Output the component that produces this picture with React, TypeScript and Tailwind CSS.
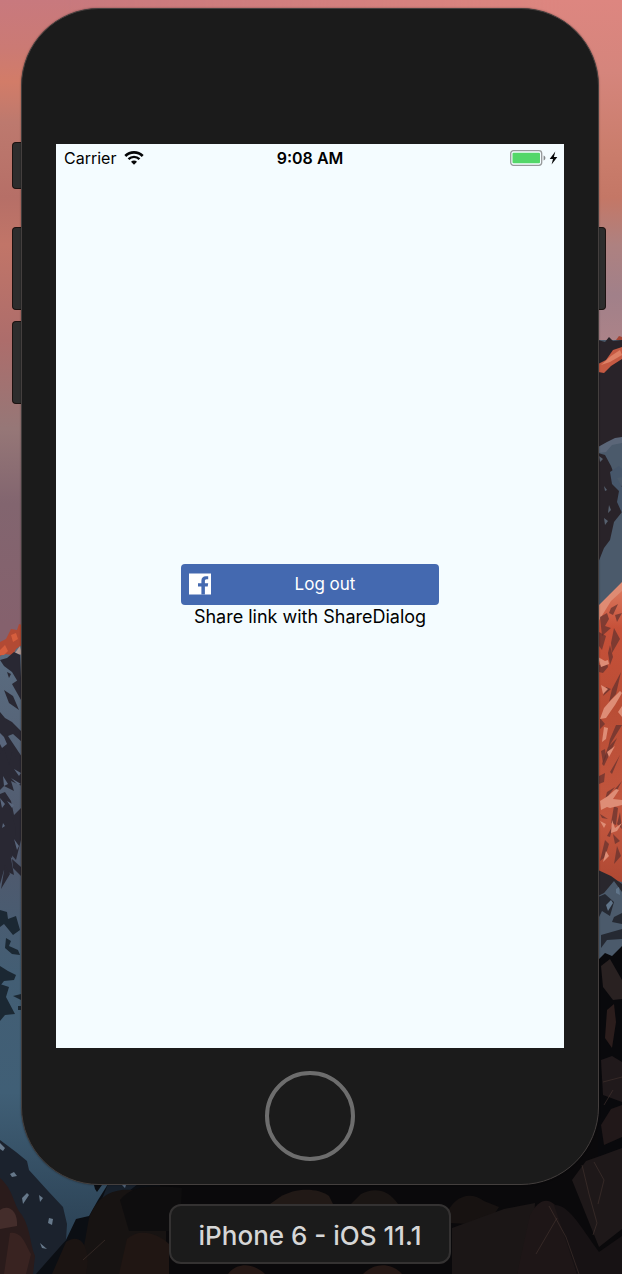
const darkRock: string[] = [
  "M0 660 L7 658 L14 652 L20 655 L22 700 L18 682 L12 672 L4 666 Z",
  "M4 690 L13 696 L19 710 L9 703 Z M12 684 L21 678 V700 Z M7 672 l4 2 -2 4 z",
  "M0 712 L5 718 L12 722 L22 732 V742 L13 734 L8 736 L16 748 L22 757 V780 L14 778 L0 765 Z",
  "M0 754 L4 748 L9 765 L12 752 L22 765 V786 L11 781 L14 791 L4 786 L0 790 Z",
  "M0 794 L5 792 L11 801 L14 815 L21 808 V840 L16 860 L10 853 L14 875 L4 870 L0 884 Z",
  "M0 807 L8 804 L16 829 L12 858 L0 850 Z M12 859 l9 8 v9 l-8 -8 z M5 865 l5 9 -9 15 z",
];

const lowerRock: string[] = [
  "M0 910 L7 912 L8 919 L16 916 L20 930 L13 935 L4 924 L0 927 Z",
  "M6 938 l5 3 -2 5 9 4 2 5 -8 -1 -7 -6 z M0 966 l8 5 8 4 -2 5 -10 1 -4 5 z",
  "M0 984 L9 987 L6 997 L15 1014 L5 1015 L0 1021 Z M13 996 l8 -2 v6 z M18 1006 h3 v4 h-3 z",
];

const snowLeft: string[] = [
  "M0 733 l4 4 3 7 -5 4 -2 -4 z M14 769 l7 4 -2 3 z M3 776 l5 8 -4 2 z M11 778 l10 6 -3 1 z",
  "M0 798 l5 6 -3 4 z M7 801 l7 4 -2 3 z M3 823 l2 3 -3 2 z M14 839 l5 7 -2 4 z",
];

const shadowRight: string[] = [
  "M598 340 L605 342 L609 337 L613 341 L622 340 V440 L598 449 Z",
  "M598 453 L605 455 L611 466 L618 485 L622 486 V512 L614 522 L610 540 L604 548 L598 563 Z",
];

const redCracks: string[] = [
  "M600 617 l7 -4 2 6 -4 7 6 2 -9 8 z M611 608 l7 -4 -5 11 -4 -2 z M615 615 l7 -2 -5 9 z",
  "M599 632 l7 4 -4 14 -3 -4 z M614 628 l6 11 -8 14 -1 -10 z M610 645 l3 12 -3 8 -2 -12 z",
  "M599 665 l8 -3 1 5 -5 6 -4 -1 z M606 687 l5 2 -8 7 z M621 672 l-5 22 -7 8 3 -13 z",
  "M600 718 l5 6 -5 5 z M622 725 l-14 23 2 -9 6 -14 z M617 738 l-13 28 -2 -2 6 -17 z M620 755 l-8 19 -2 -2 z",
  "M601 751 l4 -2 1 8 -3 6 z M599 776 l6 -3 -1 9 -5 2 z M615 787 l-10 13 2 -8 z M622 781 l-8 15 1 -7 z",
  "M614 806 l4 2 -2 17 -5 -2 z M620 812 l2 17 -5 -5 z M600 814 l8 5 -6 -1 z M613 825 l-3 12 -3 -1 z",
  "M605 840 l4 4 -4 13 -5 4 z M613 834 l7 7 -5 3 z M617 846 l4 10 -7 8 z",
];

const redLights: string[] = [
  "M598 657 l7 4 3 -1 1 4 -8 3 z M611 700 l9 -9 2 2 -7 12 -9 13 -6 1 4 -11 z",
  "M604 727 l4 1 -2 11 -4 3 z M600 801 l8 -5 8 -7 3 1 -6 9 9 1 v5 l-12 3 -3 -1 -6 3 z",
  "M600 821 l6 3 -2 4 z M612 820 l3 8 7 -5 -5 8 -6 2 z M606 851 l3 5 -6 6 z",
  "M607 752 l8 -6 -6 11 z M618 712 l4 -6 v11 z M601 685 l7 4 -5 5 z",
];

const boulders: { d: string; fill: string }[] = [
  { d: "M0 1178 C14 1190 13 1205 22 1215 C31 1230 30 1245 35 1256 L33 1274 H0 Z", fill: "#2a1b1b" },
  { d: "M0 1210 C8 1204 18 1210 17 1226 L0 1229 Z", fill: "#442d2b" },
  { d: "M10 1233 C23 1231 26 1247 31 1254 L26 1274 H4 Z", fill: "#392321" },
  { d: "M89 1218 C97 1196 113 1188 132 1190 L166 1200 V1274 H79 Z", fill: "#171312" },
  { d: "M120 1200 C132 1184 155 1185 182 1188 L180 1231 H129 Z", fill: "#0e0d0e" },
  { d: "M127 1239 C139 1228 157 1233 169 1244 V1274 H119 Z", fill: "#201613" },
  { d: "M66 1242 C84 1230 91 1254 86 1274 H52 Z", fill: "#1b1412" },
  { d: "M280 1197 C294 1188 317 1187 329 1196 L333 1204 H270 Z", fill: "#211916" },
  { d: "M361 1194 C374 1187 388 1189 398 1204 L350 1205 Z", fill: "#1a1513" },
  { d: "M445 1217 C453 1197 469 1190 484 1201 L499 1207 487 1225 450 1223 Z", fill: "#171211" },
  { d: "M452 1228 L504 1209 535 1203 533 1238 517 1274 H452 Z", fill: "#1b1616" },
  { d: "M530 1215 C540 1196 552 1197 560 1212 L577 1274 H517 Z", fill: "#1e1617" },
  { d: "M554 1205 C568 1204 579 1224 599 1252 L622 1236 V1274 H577 Z", fill: "#171214" },
  { d: "M572 1180 L586 1161 603 1155 622 1148 V1229 L599 1247 Z", fill: "#1e1819" },
  { d: "M601 1125 L611 1109 622 1105 V1137 L604 1145 Z", fill: "#211819" },
  { d: "M601 1060 L612 1056 622 1062 V1102 L603 1095 Z", fill: "#20191b" },
  { d: "M607 1010 L614 1004 616 1022 612 1048 605 1038 Z", fill: "#2b1d1c" },
  { d: "M601 966 L610 959 622 980 V999 L613 1000 603 987 Z", fill: "#292121" },
];

function Wallpaper() {
  return (
    <svg
      aria-hidden="true"
      className="absolute inset-0 h-full w-full"
      viewBox="0 0 622 1274"
      preserveAspectRatio="xMidYMid slice"
    >
      <defs>
        <linearGradient id="skyLeft" x1="0" y1="0" x2="0" y2="680" gradientUnits="userSpaceOnUse">
          <stop offset="0" stopColor="#c8797e" />
          <stop offset="0.07" stopColor="#cb7a74" />
          <stop offset="0.12" stopColor="#d27c68" />
          <stop offset="0.18" stopColor="#bd796e" />
          <stop offset="0.29" stopColor="#b66f67" />
          <stop offset="0.36" stopColor="#c17568" />
          <stop offset="0.5" stopColor="#ad6d6b" />
          <stop offset="0.63" stopColor="#967777" />
          <stop offset="0.74" stopColor="#82656f" />
          <stop offset="0.92" stopColor="#85616d" />
        </linearGradient>
        <linearGradient id="skyRight" x1="0" y1="0" x2="0" y2="360" gradientUnits="userSpaceOnUse">
          <stop offset="0" stopColor="#dd8680" />
          <stop offset="0.2" stopColor="#d5857c" />
          <stop offset="0.42" stopColor="#ca7d6c" />
          <stop offset="0.55" stopColor="#c47766" />
          <stop offset="0.68" stopColor="#ae8180" />
          <stop offset="0.82" stopColor="#a18089" />
          <stop offset="1" stopColor="#b08488" />
        </linearGradient>
        <linearGradient id="skyFade" x1="0" y1="0" x2="1" y2="0">
          <stop offset="0.1" stopColor="#000" />
          <stop offset="0.9" stopColor="#fff" />
        </linearGradient>
        <mask id="rightHalf">
          <rect width="622" height="700" fill="url(#skyFade)" />
        </mask>
        <linearGradient id="snow" x1="0" y1="650" x2="0" y2="1240" gradientUnits="userSpaceOnUse">
          <stop offset="0" stopColor="#5a6c80" />
          <stop offset="0.35" stopColor="#50596d" />
          <stop offset="0.55" stopColor="#435e74" />
          <stop offset="0.75" stopColor="#405f76" />
          <stop offset="1" stopColor="#2b4154" />
        </linearGradient>
        <linearGradient id="redFace" x1="0" y1="580" x2="0" y2="900" gradientUnits="userSpaceOnUse">
          <stop offset="0" stopColor="#df8066" />
          <stop offset="0.15" stopColor="#c75139" />
          <stop offset="0.4" stopColor="#b94d35" />
          <stop offset="0.75" stopColor="#c3573f" />
          <stop offset="1" stopColor="#a9442f" />
        </linearGradient>
      </defs>

      <rect width="622" height="700" fill="url(#skyLeft)" />
      <rect width="622" height="700" fill="url(#skyRight)" mask="url(#rightHalf)" />

      <path d="M0 650 L20 626 L300 640 V1274 H0 Z" fill="url(#snow)" />
      <path d="M0 642 L6 639 L11 629 L17 630 L19 624 L22 625 V645 L16 649 L13 655 L4 654 L0 656 Z" fill="#b24a34" />
      <path d="M0 650 L5 645 L8 651 L4 655 H0 Z M11 635 l5 -2 2 6 -5 3 z" fill="#d55e3d" />
      <path d="M15 653 L20 646 L22 655 Z" fill="#b39a94" />
      {darkRock.map((d) => (
        <path key={d} d={d} fill="#292833" />
      ))}
      {lowerRock.map((d) => (
        <path key={d} d={d} fill="#1b2833" />
      ))}
      {snowLeft.map((d) => (
        <path key={d} d={d} fill="#59667c" />
      ))}

      <path d="M598 340 H622 V960 H598 Z" fill="#4b5a6b" />
      {shadowRight.map((d) => (
        <path key={d} d={d} fill="#292329" />
      ))}
      <path d="M598 364 L606 360 L613 350 L622 347 V359 L611 366 L604 373 L598 372 Z" fill="#c55a43" />
      <path d="M601 365 L611 356 L620 350 L622 355 L610 362 Z" fill="#de8065" />
      <path d="M616 340 l3 -4 3 1 v3 z" fill="#a34333" />
      <path d="M598 447 L607 442 L615 438 L622 437 V443 L612 445 L606 452 L598 453 Z" fill="#5b6678" />
      <path d="M610 472 L619 466 L622 469 V477 L617 478 L622 487 V513 L617 502 L619 491 L612 484 Z" fill="#46566a" />
      <path d="M599 456 l4 3 -3 3 z M604 486 l3 4 -2 1 z M604 518 l4 3 -3 4 z M609 505 l2 5 -3 3 z" fill="#56606e" />
      <path d="M598 608 L609 598 L622 584 V882 L613 880 L598 870 Z" fill="url(#redFace)" />
      <path d="M598 606 L610 594 L622 582 V591 L611 601 L603 614 L598 622 Z" fill="#df8b73" />
      {redCracks.map((d) => (
        <path key={d} d={d} fill="#61302d" fillOpacity="0.7" />
      ))}
      {redLights.map((d) => (
        <path key={d} d={d} fill="#de8d76" />
      ))}
      <path d="M598 870 L611 876 L622 884 V892 L614 881 L604 893 L598 896 Z" fill="#29272d" />
      <path d="M598 897 L605 894 L614 902 L610 916 L602 911 L598 919 Z M614 917 l8 -4 v11 l-10 -2 z M601 935 l21 -6 v10 l-15 1 -6 8 z" fill="#252932" />
      <path d="M606 905 l5 -5 2 3 -5 8 z M616 889 l3 -2 1 8 -4 -2 z" fill="#60758a" />

      <path d="M598 960 L605 953 L612 956 L622 946 V1274 H200 V1185 H598 Z" fill="#09090c" />
      <path d="M0 1140 L16 1152 L27 1161 L29 1170 L48 1191 L63 1207 L67 1224 L66 1240 L40 1274 H33 L24 1229 L0 1190 Z" fill="#1b222d" />
      <path d="M0 1143 l5 5 -2 3 -3 -2 z M10 1174 l4 -2 3 4 -5 1 z M22 1198 l5 -5 2 2 -6 9 z M49 1218 l4 1 -1 6 -4 -2 z M40 1243 l7 6 -5 -1 z M39 1195 l4 3 -3 4 z" fill="#66788a" />
      <path d="M94 1185 h8 l-5 7 -2 -3 z M66 1240 L76 1219 L89 1216 L98 1200 L108 1184 H220 V1274 H36 Z" fill="#0b0e13" />
      <path d="M108 1184 h30 l-13 10 -18 15 -9 0 z" fill="#17202b" />
      <path d="M122 1185 h4 l-1 3 z M178 1184 h5 l-2 4 z" fill="#53657b" />
      <path d="M160 1184 H622 V1274 H160 Z" fill="#0a090b" />
      {boulders.map((b) => (
        <path key={b.d} d={b.d} fill={b.fill} />
      ))}
      <path
        d="M582 1165 l7 29 8 29 -4 12 M549 1206 l17 31 13 37 M594 1162 l10 18 -6 24 M603 1082 l19 -5 M604 1105 l9 -15 M557 1218 l-21 36 M105 1240 l-22 20"
        fill="none"
        stroke="#4c3933"
        strokeOpacity="0.5"
      />
      <path d="M228 1274 C238 1261 255 1264 265 1274 Z M363 1274 C376 1261 393 1264 402 1274 Z" fill="#251815" />
    </svg>
  );
}

function WifiIcon() {
  return (
    <svg aria-label="Wi-Fi" className="h-4 w-5" viewBox="0 0 20 16">
      <path d="M1.3 6 C6.2 1.2 13.8 1.2 18.7 6" fill="none" stroke="#050607" strokeWidth="2.7" />
      <path d="M4.5 9.2 C7.7 6.1 12.3 6.1 15.5 9.2" fill="none" stroke="#050607" strokeWidth="2.4" />
      <path d="M7 11.8 C8.8 10.1 11.2 10.1 13 11.8 L10 14.8 Z" fill="#050607" />
    </svg>
  );
}

function BatteryIcon() {
  return (
    <svg aria-label="Battery charging" className="h-4 w-12" viewBox="0 0 48 16">
      <rect x="0.7" y="0.7" width="31" height="14.6" rx="2.8" fill="none" stroke="#97999b" strokeWidth="1.3" />
      <rect x="2.5" y="2.8" width="27.5" height="10.4" rx="1" fill="#53d769" />
      <path d="M33.6 5.5 C36 6.3 36 9.7 33.6 10.5 Z" fill="#85878a" />
      <path d="M45.3 1.5 L39.7 8.9 H43 L41.6 14.4 L47.3 7 H43.9 Z" fill="#050607" />
    </svg>
  );
}

function FacebookMark() {
  return (
    <svg aria-hidden="true" className="size-[22px]" viewBox="0 0 22 22">
      <rect y="0.5" width="22" height="21" fill="#fff" />
      <path
        d="M12.4 21.5 V13.4 H9 V10.3 H12.4 V7.8 C12.4 4.9 14.1 3.3 16.8 3.3 H19.2 V6.2 H17.6 C16.3 6.2 15.9 6.9 15.9 8.1 V10.3 H19.2 L18.7 13.4 H15.9 V21.5 Z"
        fill="#4469b0"
      />
    </svg>
  );
}

const sideKey = "absolute w-[9px] border border-[#1c1210] bg-[#2d2d2d]";

export default function App() {
  return (
    <div
      className="relative min-h-screen overflow-hidden bg-[#0a090b]"
      style={{ fontFamily: 'Inter, "Liberation Sans", sans-serif' }}
    >
      <Wallpaper />
      <div className="relative flex flex-col items-center gap-[19px] pt-2 pr-[23px] pb-[10px] pl-[21px]">
        <div className="relative w-full max-w-[578px]">
          <span className={`${sideKey} top-[134px] -left-[9px] h-[47px] rounded-l border-r-0`} />
          <span className={`${sideKey} top-[219px] -left-[9px] h-[83px] rounded-l border-r-0`} />
          <span className={`${sideKey} top-[313px] -left-[9px] h-[83px] rounded-l border-r-0`} />
          <span className={`${sideKey} top-[219px] -right-[7px] h-[83px] rounded-r border-l-0`} />

          <div className="relative flex flex-col items-center rounded-[78px] border border-[#443f3e] bg-[#1b1b1b] px-[34px] pt-[135px] pb-[23px] shadow-[0_0_2px_rgba(0,0,0,0.4)]">
            <div className="grid aspect-[508/904] w-full grid-rows-[28px_1fr_28px] bg-[#f4fcff] text-black">
              <header className="grid grid-cols-3 items-center px-2 text-base">
                <div className="flex items-center gap-2">
                  <span>Carrier</span>
                  <WifiIcon />
                </div>
                <time className="text-center font-semibold">9:08 AM</time>
                <div className="-mr-0.5 flex justify-end">
                  <BatteryIcon />
                </div>
              </header>

              <main className="flex flex-col items-center justify-center">
                <button
                  type="button"
                  className="flex h-[41px] w-[258px] items-center rounded bg-[#4469b0] pl-2 text-white"
                >
                  <FacebookMark />
                  <span className="flex-1 text-center text-[17px] leading-6">Log out</span>
                </button>
                <button type="button" className="text-lg leading-6">
                  Share link with ShareDialog
                </button>
              </main>
            </div>

            <button
              type="button"
              aria-label="Home"
              className="mt-[23px] size-[90px] rounded-full border-4 border-[#6d6d6d]"
            />
          </div>
        </div>

        <p className="rounded-xl border-2 border-[#343232] bg-[#1b1b1b] px-7 pt-3.5 pb-2.5 text-[26px] leading-8 font-medium text-[#d6d6d6]">
          iPhone 6 - iOS 11.1
        </p>
      </div>
    </div>
  );
}
